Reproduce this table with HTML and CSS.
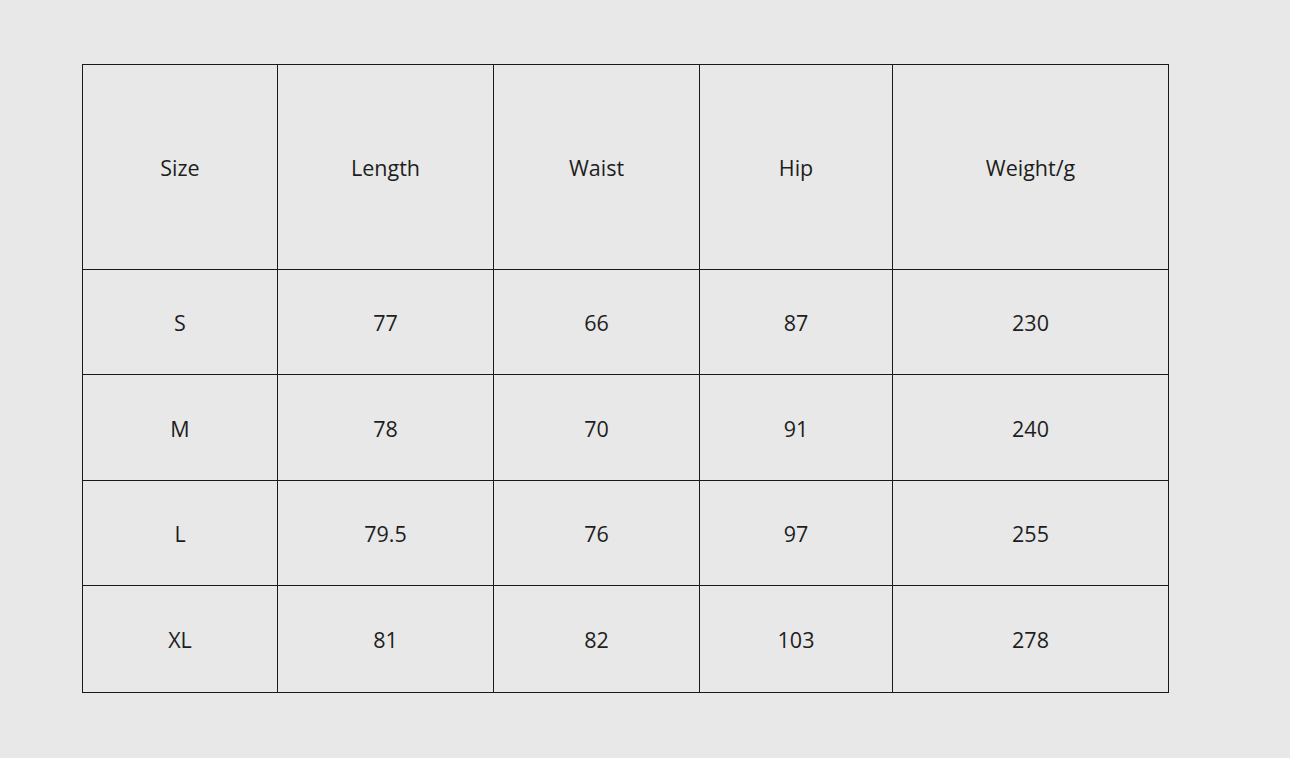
FILE: index.html
```html
<!DOCTYPE html>
<html lang="en">
<head>
<meta charset="utf-8">
<title>Size chart</title>
<link rel="stylesheet" href="styles.css">
</head>
<body>
<main class="page">
  <table class="chart">
    <colgroup>
      <col class="c1"><col class="c2"><col class="c3"><col class="c4"><col class="c5">
    </colgroup>
    <thead>
      <tr class="head"><th>Size</th><th>Length</th><th>Waist</th><th>Hip</th><th>Weight/g</th></tr>
    </thead>
    <tbody>
      <tr class="r1"><td>S</td><td>77</td><td>66</td><td>87</td><td>230</td></tr>
      <tr class="r2"><td>M</td><td>78</td><td>70</td><td>91</td><td>240</td></tr>
      <tr class="r3"><td>L</td><td>79.5</td><td>76</td><td>97</td><td>255</td></tr>
      <tr class="r4"><td>XL</td><td>81</td><td>82</td><td>103</td><td>278</td></tr>
    </tbody>
  </table>
</main>
</body>
</html>
```
FILE: styles.css
```css
html, body {
  margin: 0;
  padding: 0;
  background: #e8e8e8;
}
.page {
  padding: 64px 0 0 82px;
  font-family: "Open Sans", "Noto Sans", "Liberation Sans", sans-serif;
  color: #1e1e1e;
}
.chart {
  border-collapse: collapse;
  table-layout: fixed;
  width: 1086px;
}
.c1 { width: 195px; }
.c2 { width: 216px; }
.c3 { width: 206px; }
.c4 { width: 193px; }
.c5 { width: 276px; }
.chart th, .chart td {
  border: 1px solid #1a1a1a;
  padding: 2px 0 0;
  text-align: center;
  vertical-align: middle;
  font-weight: 400;
  font-size: 21.5px;
  line-height: 24px;
}
.head { height: 205px; }
.r1 { height: 105px; }
.r2 { height: 106px; }
.r3 { height: 105px; }
.r4 { height: 107px; }
```
